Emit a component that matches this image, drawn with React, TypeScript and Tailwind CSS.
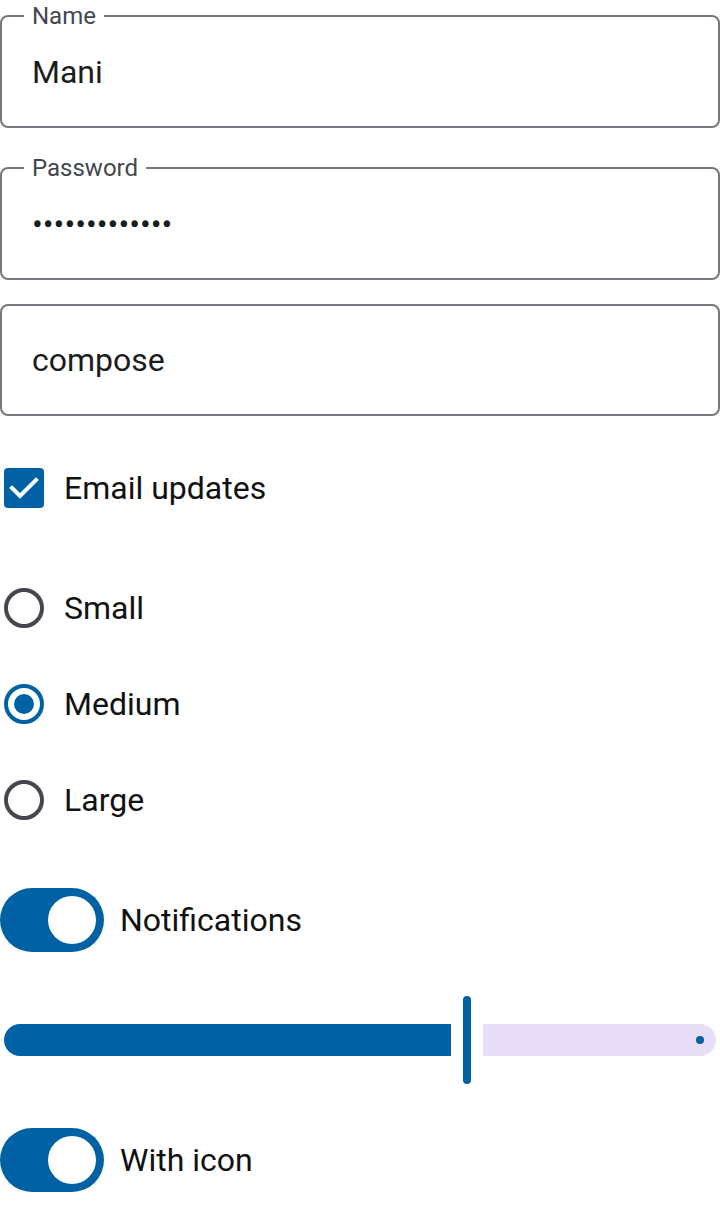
import React from "react";

const font = { fontFamily: "Roboto, 'Noto Sans', sans-serif" };

function OutlinedField({ label, children }: { label?: string; children: React.ReactNode }) {
  if (!label) {
    return (
      <div className="flex h-[112px] items-center rounded-lg border-2 border-[#73777f] px-[30px] text-[32px] text-[#1a1c1e]">
        {children}
      </div>
    );
  }
  return (
    <fieldset className="h-[128px] rounded-lg border-2 border-[#73777f] px-[30px]">
      <legend className="-ml-2 px-2 text-[24px] leading-[32px] text-[#43474e]">{label}</legend>
      <div className="mt-4 flex h-12 items-center text-[32px] text-[#1a1c1e]">{children}</div>
    </fieldset>
  );
}

function Radio({ label, selected }: { label: string; selected?: boolean }) {
  return (
    <div className="flex h-24 items-center gap-4">
      <div className="flex h-12 w-12 items-center justify-center">
        <div
          className={
            selected
              ? "flex h-10 w-10 items-center justify-center rounded-full border-4 border-[#0061a4]"
              : "h-10 w-10 rounded-full border-4 border-[#44474e]"
          }
        >
          {selected && <div className="h-5 w-5 rounded-full bg-[#0061a4]" />}
        </div>
      </div>
      <span className="text-[32px] text-[#111111]">{label}</span>
    </div>
  );
}

function Switch({ label }: { label: string }) {
  return (
    <div className="flex h-24 items-center gap-4">
      <div className="flex h-16 w-[104px] items-center justify-end rounded-full bg-[#0061a4] pr-2">
        <div className="h-12 w-12 rounded-full bg-white" />
      </div>
      <span className="text-[32px] text-[#111111]">{label}</span>
    </div>
  );
}

export default function App() {
  return (
    <div className="flex w-[720px] flex-col gap-6 bg-white" style={font}>
      <OutlinedField label="Name">Mani</OutlinedField>
      <OutlinedField label="Password">
        <span>•••••••••••••</span>
      </OutlinedField>
      <OutlinedField>compose</OutlinedField>

      <div className="flex h-24 items-center gap-4">
        <div className="flex h-12 w-12 items-center justify-center">
          <div className="flex h-10 w-10 items-center justify-center rounded bg-[#0061a4]">
            <svg width="40" height="40" viewBox="0 0 40 40" fill="none">
              <path d="M8 20 L16 28 L32 12" stroke="white" strokeWidth="4" strokeLinecap="square" />
            </svg>
          </div>
        </div>
        <span className="text-[32px] text-[#111111]">Email updates</span>
      </div>

      <div className="flex flex-col">
        <Radio label="Small" />
        <Radio label="Medium" selected />
        <Radio label="Large" />
      </div>

      <Switch label="Notifications" />

      <div className="flex h-24 items-center px-1">
        <div className="h-8 w-[447px] rounded-l-full rounded-r-[4px] bg-[#0061a4]" />
        <div className="mx-3 h-[88px] w-2 rounded-full bg-[#0061a4]" />
        <div className="relative h-8 flex-1 rounded-l-[4px] rounded-r-full bg-[#e8def8]">
          <div className="absolute right-3 top-3 h-2 w-2 rounded-full bg-[#0061a4]" />
        </div>
      </div>

      <Switch label="With icon" />
    </div>
  );
}
